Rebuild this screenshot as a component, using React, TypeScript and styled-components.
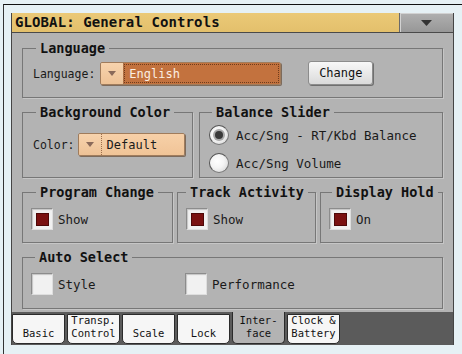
import React from "react";
import styled, { createGlobalStyle } from "styled-components";

const GlobalStyle = createGlobalStyle`
  html, body {
    margin: 0;
    padding: 0;
    width: 462px;
    height: 354px;
    overflow: hidden;
    background: #e6f1f5;
  }
  * { box-sizing: border-box; }
`;

const MONO = `"DejaVu Sans Mono", "Liberation Mono", monospace`;

const Frame = styled.div`
  margin: 4px 0 0 3px;
  height: 350px;
  border-top: 1px solid #111;
  border-left: 1px solid #333;
  padding: 8px 0 0 7px;
`;

const Screen = styled.div`
  width: 443px;
  border-left: 1px solid #454545;
  border-right: 1px solid #454545;
  background: #b3b3b3;
  display: flex;
  flex-direction: column;
  font-family: ${MONO};
  color: #111;
`;

const TitleBar = styled.div`
  display: flex;
  height: 20px;
  border-bottom: 1px solid #4a4a4a;
`;

const TitleText = styled.div`
  flex: 1;
  background: linear-gradient(#ebc977, #e3c06c);
  font-weight: bold;
  font-size: 14px;
  line-height: 19px;
  padding-left: 3px;
  letter-spacing: 0.1px;
  white-space: nowrap;
`;

const TitleButton = styled.div`
  width: 54px;
  background: linear-gradient(#b0b0b0, #979797);
  border-left: 1px solid #6a6a6a;
  box-shadow: inset 1px 1px 0 #d2d2d2;
  display: flex;
  align-items: center;
  justify-content: center;
`;

const Content = styled.div`
  padding: 8px 10px 0;
  display: flex;
  flex-direction: column;
  gap: 7px;
`;

const Group = styled.fieldset<{ $pad: string }>`
  margin: 0;
  min-width: 0;
  padding: ${(p) => p.$pad};
  border: 1px solid #777;
  box-shadow: 1px 1px 0 #c6c6c6;
`;

const Legend = styled.legend<{ $off: number }>`
  margin-left: ${(p) => p.$off}px;
  padding: 0 4px;
  font-weight: bold;
  font-size: 13.5px;
  line-height: 14px;
  color: #111;
  white-space: nowrap;
`;

const Row = styled.div`
  display: flex;
  align-items: center;
  height: 23px;
`;

const FieldLabel = styled.span<{ $gap: number }>`
  font-size: 11.5px;
  margin-right: ${(p) => p.$gap}px;
  color: #1a1a1a;
  white-space: nowrap;
`;

const Dropdown = styled.div<{ $w: number }>`
  display: flex;
  flex: none;
  width: ${(p) => p.$w}px;
  height: 23px;
  border: 1px solid #a07c5c;
  border-radius: 2px;
  box-shadow: 1px 1px 0 #7d6b5c;
  overflow: hidden;
`;

const DropArrow = styled.div`
  width: 22px;
  background: linear-gradient(#f7d3ad, #eec296);
  display: flex;
  align-items: center;
  justify-content: center;
`;

const DropValue = styled.div<{ $active?: boolean }>`
  flex: 1;
  display: flex;
  align-items: center;
  padding-left: 5px;
  font-size: 12px;
  border-left: 1px dotted #9c6f4c;
  background: ${(p) => (p.$active ? "#c3723e" : "linear-gradient(#f7d0a8, #f0c497)")};
  color: ${(p) => (p.$active ? "#fbeee2" : "#1a1a1a")};
  outline: ${(p) => (p.$active ? "1px dotted #6e3c1c" : "none")};
  outline-offset: -2px;
`;

const Button = styled.div`
  margin-left: 27px;
  width: 65px;
  height: 24px;
  border: 1px solid #8c8c8c;
  border-radius: 3px;
  background: linear-gradient(#f8f8f8, #dadada);
  box-shadow: 1px 1px 0 #6f6f6f;
  display: flex;
  align-items: center;
  justify-content: center;
  font-size: 12px;
  margin-top: -2px;
`;

const Grid = styled.div<{ $cols: string; $gap: number }>`
  display: grid;
  grid-template-columns: ${(p) => p.$cols};
  column-gap: ${(p) => p.$gap}px;
`;

const RadioList = styled.div`
  display: flex;
  flex-direction: column;
  gap: 6px;
`;

const Item = styled.div`
  display: flex;
  align-items: center;
  height: 22px;
  font-size: 12.5px;
  color: #1a1a1a;
  white-space: nowrap;
`;

const Radio = styled.span<{ $on?: boolean }>`
  flex: none;
  width: 20px;
  height: 20px;
  border-radius: 50%;
  margin-right: 7px;
  border: 1px solid #7a7a7a;
  border-top-color: #555;
  border-left-color: #555;
  background: radial-gradient(circle at 40% 40%, #ffffff 0%, #f4f4f4 45%, #cfcfcf 100%);
  display: flex;
  align-items: center;
  justify-content: center;
  &::after {
    content: "";
    display: ${(p) => (p.$on ? "block" : "none")};
    width: 8px;
    height: 8px;
    border-radius: 50%;
    background: #3a3a3a;
    box-shadow: 0 0 0 2px #a9a9a9;
  }
`;

const Check = styled.span<{ $on?: boolean }>`
  flex: none;
  width: 22px;
  height: 22px;
  margin-right: 5px;
  background: #f1f1f1;
  border: 1px solid;
  border-color: #8c8c8c #dedede #dedede #8c8c8c;
  box-shadow: inset 1px 1px 1px #c4c4c4;
  display: flex;
  align-items: center;
  justify-content: center;
  &::after {
    content: "";
    display: ${(p) => (p.$on ? "block" : "none")};
    width: 11px;
    height: 11px;
    background: #7a1111;
    border: 1px solid #4e0808;
  }
`;

const TabStrip = styled.div`
  margin-top: 3px;
  height: 33px;
  background: #5b5b5b;
  display: flex;
  gap: 2px;
`;

const Tab = styled.div<{ $active?: boolean }>`
  width: 53px;
  margin-top: ${(p) => (p.$active ? 0 : 2)}px;
  margin-bottom: 1px;
  background: ${(p) => (p.$active ? "#b3b3b3" : "#f6f6f6")};
  border: 1px solid #2b2b2b;
  border-top: ${(p) => (p.$active ? "none" : "1px solid #2b2b2b")};
  border-radius: 0 0 5px 5px;
  display: flex;
  flex-direction: column;
  justify-content: flex-end;
  align-items: center;
  padding-bottom: 3px;
  font-size: 10.5px;
  line-height: 13px;
  text-align: center;
  color: #111;
  white-space: nowrap;
`;

const DownTri = ({ color, w = 10, h = 5 }: { color: string; w?: number; h?: number }) => (
  <svg width={w} height={h} viewBox={`0 0 ${w} ${h}`}>
    <polygon points={`0,0 ${w},0 ${w / 2},${h}`} fill={color} />
  </svg>
);

const tabs: { label: React.ReactNode; active?: boolean }[] = [
  { label: "Basic" },
  { label: <>Transp.<br />Control</> },
  { label: "Scale" },
  { label: "Lock" },
  { label: <>Inter-<br />face</>, active: true },
  { label: <>Clock &amp;<br />Battery</> },
];

export default function App() {
  return (
    <>
      <GlobalStyle />
      <Frame>
        <Screen>
          <TitleBar>
            <TitleText>GLOBAL: General Controls</TitleText>
            <TitleButton>
              <DownTri color="#333" w={11} h={6} />
            </TitleButton>
          </TitleBar>
          <Content>
            <Group $pad="7px 10px 12px 10px">
              <Legend $off={3}>Language</Legend>
              <Row>
                <FieldLabel $gap={5}>Language:</FieldLabel>
                <Dropdown $w={181}>
                  <DropArrow>
                    <DownTri color="#8a6a5a" w={8} h={5} />
                  </DropArrow>
                  <DropValue $active>English</DropValue>
                </Dropdown>
                <Button>Change</Button>
              </Row>
            </Group>

            <Grid $cols="171px 1fr" $gap={6}>
              <Group $pad="14px 10px 0 10px">
                <Legend $off={3}>Background Color</Legend>
                <Row>
                  <FieldLabel $gap={3}>Color:</FieldLabel>
                  <Dropdown $w={107}>
                    <DropArrow>
                      <DownTri color="#8a6a5a" w={8} h={5} />
                    </DropArrow>
                    <DropValue>Default</DropValue>
                  </Dropdown>
                </Row>
              </Group>
              <Group $pad="5px 10px 3px 9px">
                <Legend $off={3}>Balance Slider</Legend>
                <RadioList>
                  <Item>
                    <Radio $on />
                    Acc/Sng - RT/Kbd Balance
                  </Item>
                  <Item>
                    <Radio />
                    Acc/Sng Volume
                  </Item>
                </RadioList>
              </Group>
            </Grid>

            <Grid $cols="151px 139px 1fr" $gap={4}>
              <Group $pad="9px 8px 12px 8px">
                <Legend $off={5}>Program Change</Legend>
                <Item>
                  <Check $on />
                  Show
                </Item>
              </Group>
              <Group $pad="9px 8px 12px 8px">
                <Legend $off={0}>Track Activity</Legend>
                <Item>
                  <Check $on />
                  Show
                </Item>
              </Group>
              <Group $pad="9px 8px 12px 8px">
                <Legend $off={3}>Display Hold</Legend>
                <Item>
                  <Check $on />
                  On
                </Item>
              </Group>
            </Grid>

            <Group $pad="9px 8px 13px 8px">
              <Legend $off={4}>Auto Select</Legend>
              <Grid $cols="154px 1fr" $gap={0}>
                <Item>
                  <Check />
                  Style
                </Item>
                <Item>
                  <Check />
                  Performance
                </Item>
              </Grid>
            </Group>
          </Content>
          <TabStrip>
            {tabs.map((t, i) => (
              <Tab key={i} $active={t.active}>
                <span>{t.label}</span>
              </Tab>
            ))}
          </TabStrip>
        </Screen>
      </Frame>
    </>
  );
}
